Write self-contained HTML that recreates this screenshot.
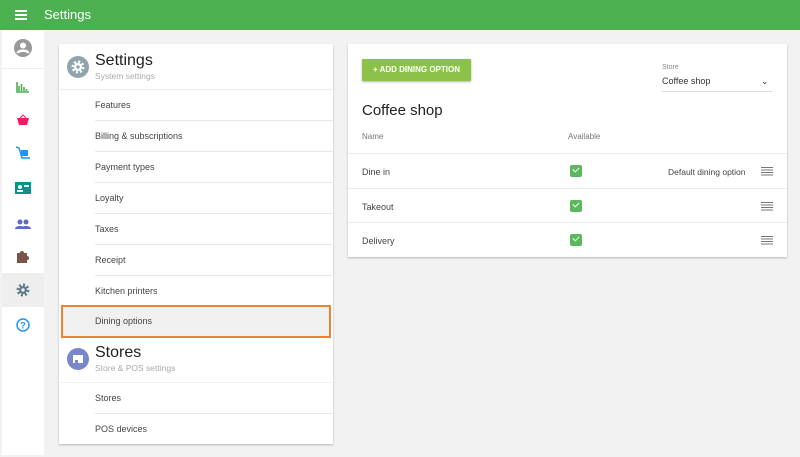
<!DOCTYPE html>
<html><head><meta charset="utf-8"><style>
*{margin:0;padding:0;box-sizing:border-box}
body{width:800px;height:457px;background:#f2f2f2;font-family:"Liberation Sans",sans-serif;position:relative;overflow:hidden;color:#333}
.top{position:absolute;left:0;top:0;width:800px;height:30px;background:#4caf50;color:#fff}
.top .t{position:absolute;left:44px;top:7px;font-size:13px}
.side{position:absolute;left:2px;top:30px;width:42px;height:425px;background:#fff}
.ic{position:absolute;left:0;width:42px;text-align:center}
.card{position:absolute;background:#fff;box-shadow:0 1px 2px rgba(0,0,0,.25)}
.item{position:absolute;left:36px;right:0;height:31px;border-bottom:1px solid #e8e8e8;font-size:9px;color:#444;padding-left:0;line-height:31px}
.hd{position:absolute;left:36px;font-size:16px;color:#222}
.sub{position:absolute;left:36px;font-size:8.5px;color:#aaa}
.row{position:absolute;left:0;right:0;height:35px;border-top:1px solid #ececec;font-size:9px;color:#444}
.cb{position:absolute;left:222px;top:11px;width:12px;height:12px;background:#5cb85c;border-radius:2px}
.hb{position:absolute;left:413px;top:13px;width:12px;height:9px;background:repeating-linear-gradient(#777 0 1px,transparent 1px 2.5px)}
</style></head><body>
<div class="top"><div style="position:absolute;left:15px;top:10px;width:12px;height:10px;background:repeating-linear-gradient(#fff 0 2px,transparent 2px 4px)"></div><div class="t">Settings</div></div>
<div class="side">
<div class="ic" style="top:8px"><svg width="20" height="20" viewBox="0 0 20 20"><circle cx="10" cy="10" r="9" fill="#999"/><circle cx="10" cy="7.5" r="3" fill="#fff"/><path d="M4.5 15c1.5-3 9.5-3 11 0" stroke="#fff" stroke-width="2.5" fill="none"/></svg></div>
<div style="position:absolute;left:0;top:38px;width:42px;height:1px;background:#eee"></div>
<div class="ic" style="top:50px"><svg width="14" height="12"><path d="M1 1v10h12M3 10V5M5.5 10V3M8 10V6M10.5 10V8" stroke="#4caf50" stroke-width="1.6" fill="none"/></svg></div>
<div class="ic" style="top:83px"><svg width="14" height="12"><path d="M1 4h12l-2 7H3z" fill="#e91e63"/><path d="M4 4l3-3 3 3" stroke="#e91e63" fill="none"/></svg></div>
<div class="ic" style="top:116px"><svg width="16" height="14"><path d="M1 1l3 1 3 10h8" stroke="#2196f3" stroke-width="1.5" fill="none"/><rect x="6" y="4" width="7" height="6" fill="#2196f3"/></svg></div>
<div class="ic" style="top:151px"><svg width="16" height="12"><rect width="16" height="12" fill="#009688"/><circle cx="5" cy="5" r="2" fill="#fff"/><rect x="2" y="8" width="6" height="2" fill="#fff"/><rect x="9" y="3" width="5" height="2" fill="#fff"/></svg></div>
<div class="ic" style="top:186px"><svg width="16" height="10"><circle cx="5" cy="3" r="2.5" fill="#5c6bc0"/><circle cx="11" cy="3" r="2.5" fill="#5c6bc0"/><path d="M0 10c0-4 10-4 10 0zM6 10c0-4 10-4 10 0z" fill="#5c6bc0"/></svg></div>
<div class="ic" style="top:219px"><svg width="14" height="14"><path d="M1 4h3a2 2 0 1 1 4 0h3v3a2 2 0 1 1 0 4v3H1z" fill="#795548"/></svg></div>
<div style="position:absolute;left:0;top:243px;width:42px;height:34px;background:#eee"></div>
<div class="ic" style="top:253px"><svg width="14" height="14" viewBox="0 0 14 14"><circle cx="7" cy="7" r="5" fill="none" stroke="#607d8b" stroke-width="3" stroke-dasharray="2 1.9"/><circle cx="7" cy="7" r="4" fill="#607d8b"/><circle cx="7" cy="7" r="1.7" fill="#eee"/></svg></div>
<div class="ic" style="top:288px"><svg width="14" height="14"><circle cx="7" cy="7" r="6" stroke="#2196f3" stroke-width="1.5" fill="none"/><text x="7" y="10.5" font-size="9" font-weight="bold" text-anchor="middle" fill="#2196f3" font-family="Liberation Sans">?</text></svg></div>
</div>

<div class="card" style="left:59px;top:44px;width:274px;height:400px">
<div style="position:absolute;left:8px;top:12px;width:22px;height:22px;border-radius:50%;background:#90a4ae"><svg width="22" height="22" viewBox="0 0 22 22"><circle cx="11" cy="11" r="5" fill="none" stroke="#fff" stroke-width="3" stroke-dasharray="2 1.9"/><circle cx="11" cy="11" r="4" fill="#fff"/><circle cx="11" cy="11" r="1.7" fill="#90a4ae"/></svg></div>
<div class="hd" style="top:8px">Settings</div>
<div class="sub" style="top:27px">System settings</div>
<div style="position:absolute;left:0;right:0;top:45px;height:1px;background:#eee"></div>
<div class="item" style="top:46px">Features</div>
<div class="item" style="top:77px">Billing &amp; subscriptions</div>
<div class="item" style="top:108px">Payment types</div>
<div class="item" style="top:139px">Loyalty</div>
<div class="item" style="top:170px">Taxes</div>
<div class="item" style="top:201px">Receipt</div>
<div class="item" style="top:232px;border:none">Kitchen printers</div>
<div style="position:absolute;left:2px;top:261px;width:270px;height:33px;background:#f0f0f0;border:2px solid #f0832a;font-size:9px;color:#444;line-height:29px;padding-left:32px">Dining options</div>
<div style="position:absolute;left:8px;top:304px;width:22px;height:22px;border-radius:50%;background:#7986cb"><svg width="22" height="22"><rect x="6" y="7" width="10" height="3" fill="#fff"/><rect x="6" y="10" width="10" height="5" fill="#fff"/><rect x="8" y="12" width="3" height="3" fill="#7986cb"/></svg></div>
<div class="hd" style="top:300px">Stores</div>
<div class="sub" style="top:319px">Store &amp; POS settings</div>
<div style="position:absolute;left:0;right:0;top:338px;height:1px;background:#f2f2f2"></div>
<div class="item" style="top:339px">Stores</div>
<div class="item" style="top:370px;border:none">POS devices</div>
</div>

<div class="card" style="left:348px;top:44px;width:439px;height:213px">
<div style="position:absolute;left:14px;top:15px;width:109px;height:22px;background:#8bc34a;color:#fff;font-size:8px;font-weight:bold;line-height:22px;text-align:center;box-shadow:0 1px 2px rgba(0,0,0,.3);border-radius:1px">+ ADD DINING OPTION</div>
<div style="position:absolute;left:314px;top:20px;font-size:7px;color:#888">Store</div>
<div style="position:absolute;left:314px;top:32px;font-size:9px;color:#333">Coffee shop</div>
<div style="position:absolute;left:413px;top:32px;font-size:9px;color:#333">&#8964;</div>
<div style="position:absolute;left:314px;top:47px;width:110px;height:1px;background:#ddd"></div>
<div style="position:absolute;left:14px;top:58px;font-size:15px;color:#222">Coffee shop</div>
<div style="position:absolute;left:14px;top:88px;font-size:8px;color:#777">Name</div>
<div style="position:absolute;left:220px;top:88px;font-size:8px;color:#777">Available</div>
<div class="row" style="top:109px"><span style="position:absolute;left:14px;top:13px">Dine in</span><div class="cb"></div><span style="position:absolute;left:320px;top:13px;font-size:8.5px">Default dining option</span><div class="hb"></div></div>
<div class="row" style="top:144px"><span style="position:absolute;left:14px;top:13px">Takeout</span><div class="cb"></div><div class="hb"></div></div>
<div class="row" style="top:178px"><span style="position:absolute;left:14px;top:13px">Delivery</span><div class="cb"></div><div class="hb"></div></div>
</div>
<style>.cb::after{content:"";position:absolute;left:3px;top:2px;width:5px;height:3px;border-left:1.5px solid #fff;border-bottom:1.5px solid #fff;transform:rotate(-45deg)}</style>
</body></html>
